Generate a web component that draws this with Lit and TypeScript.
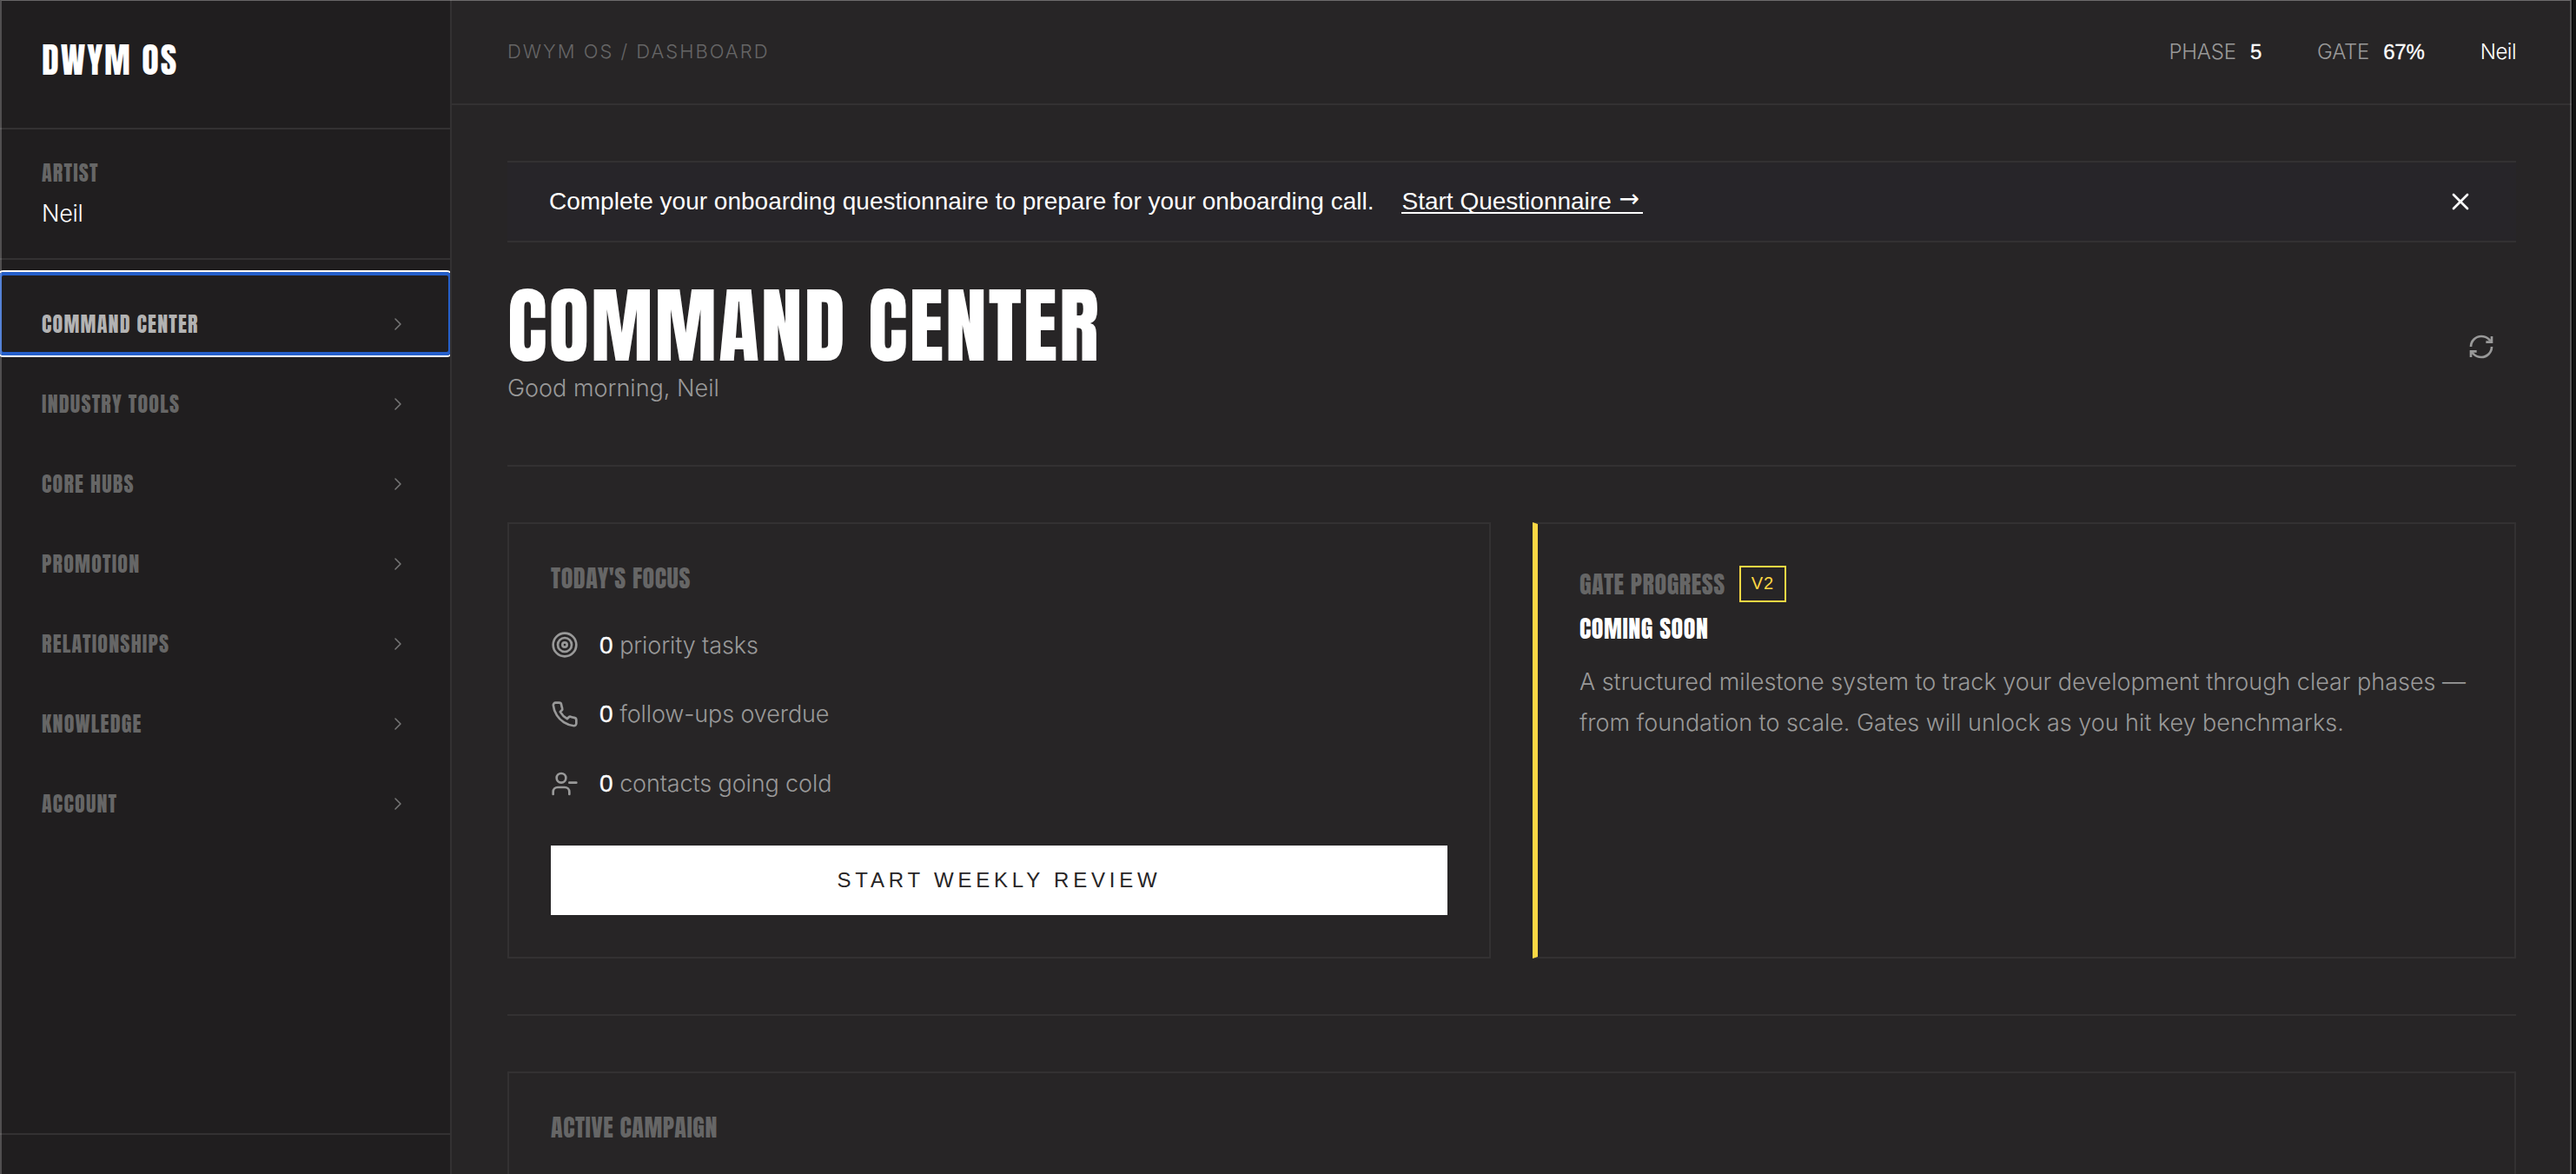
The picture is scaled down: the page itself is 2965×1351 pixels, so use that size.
import { css, html, LitElement, svg, type SVGTemplateResult, type TemplateResult } from "lit";
import { customElement, property, state } from "lit/decorators.js";
import { classMap } from "lit/directives/class-map.js";

const icons: Record<string, SVGTemplateResult> = {
  chevron: svg`<path d="m9 18 6-6-6-6" />`,
  close: svg`<path d="M18 6 6 18" /><path d="m6 6 12 12" />`,
  refresh: svg`
    <path d="M3 12a9 9 0 0 1 9-9 9.75 9.75 0 0 1 6.74 2.74L21 8" />
    <path d="M21 3v5h-5" />
    <path d="M21 12a9 9 0 0 1-9 9 9.75 9.75 0 0 1-6.74-2.74L3 16" />
    <path d="M8 16H3v5" />`,
  target: svg`
    <circle cx="12" cy="12" r="10" />
    <circle cx="12" cy="12" r="6" />
    <circle cx="12" cy="12" r="2" />`,
  phone: svg`<path d="M22 16.92v3a2 2 0 0 1-2.18 2 19.79 19.79 0 0 1-8.63-3.07 19.5 19.5 0 0 1-6-6 19.79 19.79 0 0 1-3.07-8.67A2 2 0 0 1 4.11 2h3a2 2 0 0 1 2 1.72 12.84 12.84 0 0 0 .7 2.81 2 2 0 0 1-.45 2.11L8.09 9.91a16 16 0 0 0 6 6l1.27-1.27a2 2 0 0 1 2.11-.45 12.84 12.84 0 0 0 2.81.7A2 2 0 0 1 22 16.92z" />`,
  userMinus: svg`
    <path d="M16 21v-2a4 4 0 0 0-4-4H6a4 4 0 0 0-4 4v2" />
    <circle cx="9" cy="7" r="4" />
    <path d="M22 11h-6" />`,
};

@customElement("dwym-icon")
export class DwymIcon extends LitElement {
  static override styles = css`
    :host {
      display: block;
      flex: none;
      width: 32px;
      height: 32px;
    }
    svg {
      display: block;
      width: 100%;
      height: 100%;
      fill: none;
      stroke: currentColor;
      stroke-linecap: round;
      stroke-linejoin: round;
    }
    .square {
      stroke-linecap: butt;
      stroke-linejoin: miter;
    }
  `;

  @property() name = "chevron";
  @property({ type: Number }) weight = 2;
  @property({ type: Boolean }) square = false;

  protected override render(): TemplateResult {
    return html`
      <svg viewBox="0 0 24 24" class=${classMap({ square: this.square })} stroke-width=${this.weight}>
        ${icons[this.name]}
      </svg>
    `;
  }
}

@customElement("dwym-sidebar")
export class DwymSidebar extends LitElement {
  static override styles = css`
    :host {
      display: flex;
      flex-direction: column;
      box-sizing: border-box;
      width: 520px;
      height: 100%;
      overflow: hidden;
      border-right: 2px solid #333132;
      background: #201e1f;
      font-family: Anton, "Roboto Condensed", sans-serif;
      font-weight: 400;
      text-transform: uppercase;
    }
    .brand {
      box-sizing: border-box;
      height: 149px;
      padding: 49px 48px 0;
      border-bottom: 2px solid #333132;
      font-size: 40px;
      line-height: 40px;
      letter-spacing: 0.05em;
    }
    .artist {
      box-sizing: border-box;
      height: 150px;
      padding: 38px 48px 0;
      border-bottom: 2px solid #333132;
    }
    .label {
      color: #666;
      font-size: 24px;
      line-height: 24px;
      letter-spacing: 0.05em;
    }
    .name {
      margin-top: 11px;
      font: 300 27px/48px Inter, sans-serif;
      letter-spacing: -0.3px;
      text-transform: none;
    }
    nav {
      flex: 1;
      padding-top: 16px;
    }
    .item {
      position: relative;
      display: flex;
      align-items: center;
      justify-content: space-between;
      box-sizing: border-box;
      width: 100%;
      height: 92px;
      padding: 46px 48px 22px;
      border: none;
      background: none;
      color: #666;
      font: inherit;
      font-size: 24px;
      line-height: 24px;
      letter-spacing: 0.05em;
      text-transform: inherit;
    }
    .item dwym-icon {
      width: 24px;
      height: 24px;
      color: #777;
    }
    .focused {
      color: #b3b3b3;
    }
    .focused::after {
      content: "";
      position: absolute;
      inset: -2px;
      border: 4px solid #255fca;
      border-radius: 6px;
      box-shadow: 0 0 0 2px #fff;
    }
    footer {
      height: 45px;
      border-top: 2px solid #333132;
    }
  `;

  @state() private active = "Command Center";

  private sections = [
    "Command Center",
    "Industry Tools",
    "Core Hubs",
    "Promotion",
    "Relationships",
    "Knowledge",
    "Account",
  ];

  protected override render(): TemplateResult {
    return html`
      <div class="brand">DWYM OS</div>
      <div class="artist">
        <div class="label">Artist</div>
        <div class="name">Neil</div>
      </div>
      <nav>
        ${this.sections.map(
          (section) => html`
            <button
              class=${classMap({ item: true, focused: section === this.active })}
              @click=${() => (this.active = section)}
            >
              <span>${section}</span>
              <dwym-icon name="chevron" weight="1.5"></dwym-icon>
            </button>
          `
        )}
      </nav>
      <footer></footer>
    `;
  }
}

@customElement("app-root")
export class AppRoot extends LitElement {
  static override styles = css`
    :host {
      position: relative;
      display: flex;
      box-sizing: border-box;
      width: 100%;
      height: 1351px;
      padding-right: 5px;
      overflow: hidden;
      background: #111;
      color: #fff;
      font: 300 27px/47.6px Inter, sans-serif;
    }
    /* window edge highlight */
    :host::after {
      content: "";
      position: absolute;
      inset: 0 5px 0 0;
      border: solid rgba(255, 255, 255, 0.22);
      border-width: 1px 2px 0;
      border-top-color: rgba(255, 255, 255, 0.32);
      box-shadow: 1px 0 0 #000;
      pointer-events: none;
    }
    dwym-sidebar {
      flex: none;
    }
    .page {
      flex: 1;
      min-width: 0;
      background: #272526;
    }
    .topbar {
      display: flex;
      align-items: center;
      justify-content: space-between;
      box-sizing: border-box;
      height: 121px;
      padding: 0 64px;
      border-bottom: 2px solid #333132;
      font-size: 24px;
    }
    .crumbs {
      padding-top: 1px;
      color: #666;
      font-size: 22px;
      letter-spacing: 2px;
    }
    .status {
      display: flex;
      gap: 64px;
    }
    .stat {
      display: flex;
      gap: 16px;
      color: #999;
      letter-spacing: -0.2px;
    }
    .num {
      color: #fff;
      font-family: "Liberation Sans", sans-serif;
      font-weight: 400;
      -webkit-text-stroke: 0.3px #fff;
    }
    .user {
      letter-spacing: -0.5px;
    }
    .content {
      padding: 64px;
    }
    .banner {
      display: flex;
      align-items: center;
      box-sizing: border-box;
      height: 94px;
      padding: 0 48px;
      border: solid #333132;
      border-width: 2px 0;
      background: #272529;
      font: 400 28px/24px "Liberation Sans", sans-serif;
    }
    .banner a {
      margin: 2px 0 0 32px;
      border-bottom: 2px solid #fff;
    }
    .arrow {
      display: inline-block;
      width: 28px;
      font-family: "DejaVu Sans", sans-serif;
      transform: translate(1px, -3px);
    }
    .banner dwym-icon {
      margin-left: auto;
    }
    .heading {
      display: flex;
      align-items: center;
      justify-content: space-between;
      margin-top: 48px;
      padding-right: 24px;
    }
    h1,
    h2,
    p {
      margin: 0;
    }
    h1 {
      font: 400 96px/96px Anton, "Roboto Condensed", sans-serif;
      letter-spacing: 0.02em;
      text-transform: uppercase;
    }
    .muted {
      color: #999;
    }
    .rule {
      height: 2px;
      margin: 64px 0;
      background: #333132;
    }
    .cards {
      display: grid;
      grid-template-columns: 1fr 1fr;
      gap: 48px;
    }
    .card {
      box-sizing: border-box;
      padding: 48px;
      border: 2px solid #333132;
    }
    .card p {
      letter-spacing: -0.03px;
    }
    .gate {
      border-left: 6px solid #fdd844;
    }
    .campaign {
      height: 240px;
    }
    h2 {
      color: #666;
      font: 400 28px/28px Anton, "Roboto Condensed", sans-serif;
      letter-spacing: 0.02em;
      text-transform: uppercase;
    }
    .focus {
      display: grid;
      gap: 32px;
      margin: 40px 0 48px;
    }
    .task {
      display: flex;
      align-items: center;
      gap: 24px;
      color: #999;
      letter-spacing: -0.12px;
    }
    .task .num {
      font-size: 28px;
      line-height: 1;
      white-space: pre;
    }
    .review {
      display: block;
      width: 100%;
      height: 80px;
      border: none;
      background: #fff;
      color: #272526;
      font: 400 24px "Liberation Sans", sans-serif;
      letter-spacing: 0.2em;
      text-transform: uppercase;
    }
    .title {
      display: flex;
      align-items: center;
      gap: 16px;
    }
    .badge {
      box-sizing: border-box;
      height: 42px;
      padding: 0 12px;
      border: 2px solid #fdd844;
      color: #fdd844;
      font: 400 20px/37px "Liberation Sans", sans-serif;
      letter-spacing: 0.05em;
    }
    .soon {
      margin: 16px 0 24px;
      color: #fff;
    }
  `;

  private tasks = [
    { icon: "target", count: 0, label: "priority tasks" },
    { icon: "phone", count: 0, label: "follow-ups overdue" },
    { icon: "userMinus", count: 0, label: "contacts going cold" },
  ];

  protected override render(): TemplateResult {
    return html`
      <dwym-sidebar></dwym-sidebar>
      <div class="page">
        <header class="topbar">
          <div class="crumbs">DWYM OS / DASHBOARD</div>
          <div class="status">
            <div class="stat">PHASE <span class="num">5</span></div>
            <div class="stat">GATE <span class="num">67%</span></div>
            <div class="user">Neil</div>
          </div>
        </header>
        <main class="content">
          <div class="banner">
            <span>Complete your onboarding questionnaire to prepare for your onboarding call.</span>
            <a>Start Questionnaire <span class="arrow">→</span></a>
            <dwym-icon name="close"></dwym-icon>
          </div>
          <div class="heading">
            <div>
              <h1>Command Center</h1>
              <p class="muted">Good morning, Neil</p>
            </div>
            <dwym-icon class="muted" name="refresh" square></dwym-icon>
          </div>
          <div class="rule"></div>
          <div class="cards">
            <section class="card">
              <h2>Today's Focus</h2>
              <div class="focus">
                ${this.tasks.map(
                  (task) => html`
                    <div class="task">
                      <dwym-icon class="muted" name=${task.icon}></dwym-icon>
                      <div><span class="num">${task.count} </span>${task.label}</div>
                    </div>
                  `
                )}
              </div>
              <button class="review">Start Weekly Review</button>
            </section>
            <section class="card gate">
              <div class="title">
                <h2>Gate Progress</h2>
                <span class="badge">V2</span>
              </div>
              <h2 class="soon">Coming Soon</h2>
              <p class="muted">
                A structured milestone system to track your development through clear phases — from foundation to
                scale. Gates will unlock as you hit key benchmarks.
              </p>
            </section>
          </div>
          <div class="rule"></div>
          <section class="card campaign">
            <h2>Active Campaign</h2>
          </section>
        </main>
      </div>
    `;
  }
}

declare global {
  interface HTMLElementTagNameMap {
    "app-root": AppRoot;
    "dwym-sidebar": DwymSidebar;
    "dwym-icon": DwymIcon;
  }
}
